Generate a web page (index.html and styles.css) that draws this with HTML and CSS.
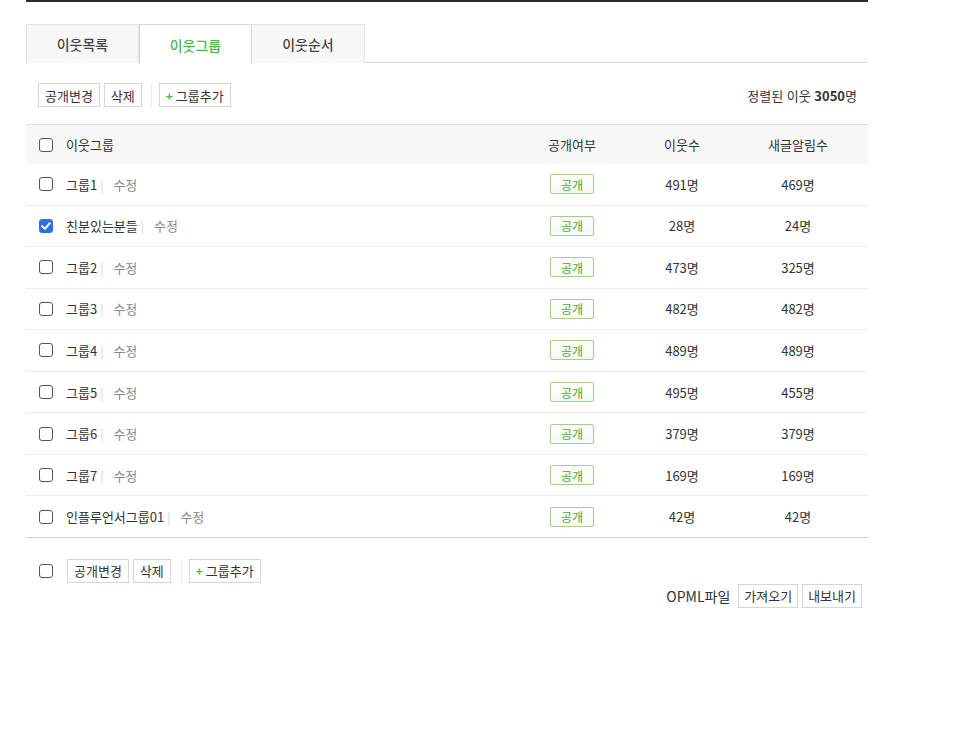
FILE: index.html
```html
<!DOCTYPE html>
<html lang="ko">
<head>
<meta charset="utf-8">
<link rel="stylesheet" href="styles.css">
</head>
<body>
<div class="wrap">
  <div class="topline"></div>
  <div class="tabs">
    <div class="tab">이웃목록</div>
    <div class="tab active">이웃그룹</div>
    <div class="tab">이웃순서</div>
  </div>
  <div class="toolbar">
    <div class="btns">
      <span class="btn">공개변경</span>
      <span class="btn">삭제</span>
      <span class="sep"></span>
      <span class="btn"><span class="plus">+</span>그룹추가</span>
    </div>
    <div class="count">정렬된 이웃 <b>3050</b>명</div>
  </div>
  <div class="table">
    <div class="row head">
      <div class="c-name"><span class="cb"></span>이웃그룹</div>
      <div class="c-mid">공개여부</div>
      <div class="c-mid">이웃수</div>
      <div class="c-mid">새글알림수</div>
    </div>
    <div class="row"><div class="c-name"><span class="cb"></span>그룹1<span class="bar">|</span><span class="edit">수정</span></div><div class="c-mid"><span class="pub">공개</span></div><div class="c-mid">491명</div><div class="c-mid">469명</div></div>
    <div class="row"><div class="c-name"><span class="cb checked"><svg viewBox="0 0 14 14" width="14" height="14"><path d="M3.2 7.2 L6 9.8 L10.8 4.2" fill="none" stroke="#fff" stroke-width="2" stroke-linecap="round" stroke-linejoin="round"/></svg></span>친분있는분들<span class="bar">|</span><span class="edit">수정</span></div><div class="c-mid"><span class="pub">공개</span></div><div class="c-mid">28명</div><div class="c-mid">24명</div></div>
    <div class="row"><div class="c-name"><span class="cb"></span>그룹2<span class="bar">|</span><span class="edit">수정</span></div><div class="c-mid"><span class="pub">공개</span></div><div class="c-mid">473명</div><div class="c-mid">325명</div></div>
    <div class="row"><div class="c-name"><span class="cb"></span>그룹3<span class="bar">|</span><span class="edit">수정</span></div><div class="c-mid"><span class="pub">공개</span></div><div class="c-mid">482명</div><div class="c-mid">482명</div></div>
    <div class="row"><div class="c-name"><span class="cb"></span>그룹4<span class="bar">|</span><span class="edit">수정</span></div><div class="c-mid"><span class="pub">공개</span></div><div class="c-mid">489명</div><div class="c-mid">489명</div></div>
    <div class="row"><div class="c-name"><span class="cb"></span>그룹5<span class="bar">|</span><span class="edit">수정</span></div><div class="c-mid"><span class="pub">공개</span></div><div class="c-mid">495명</div><div class="c-mid">455명</div></div>
    <div class="row"><div class="c-name"><span class="cb"></span>그룹6<span class="bar">|</span><span class="edit">수정</span></div><div class="c-mid"><span class="pub">공개</span></div><div class="c-mid">379명</div><div class="c-mid">379명</div></div>
    <div class="row"><div class="c-name"><span class="cb"></span>그룹7<span class="bar">|</span><span class="edit">수정</span></div><div class="c-mid"><span class="pub">공개</span></div><div class="c-mid">169명</div><div class="c-mid">169명</div></div>
    <div class="row last"><div class="c-name"><span class="cb"></span>인플루언서그룹01<span class="bar">|</span><span class="edit">수정</span></div><div class="c-mid"><span class="pub">공개</span></div><div class="c-mid">42명</div><div class="c-mid">42명</div></div>
  </div>
  <div class="bottom">
    <span class="cb"></span>
    <span class="btn">공개변경</span>
    <span class="btn">삭제</span>
    <span class="sep"></span>
    <span class="btn"><span class="plus">+</span>그룹추가</span>
  </div>
  <div class="opml">
    <span class="opml-label">OPML파일</span>
    <span class="btn">가져오기</span>
    <span class="btn">내보내기</span>
  </div>
</div>
</body>
</html>
```
FILE: styles.css
```css
* { box-sizing: border-box; }
body {
  margin: 0;
  background: #fff;
  font-family: "Noto Sans CJK KR", "Noto Sans", sans-serif;
  font-size: 13px;
  color: #333;
}
.wrap {
  width: 842px;
  margin-left: 26px;
}
.topline {
  height: 2px;
  background: #2b2b2b;
}
.tabs {
  margin-top: 22px;
  display: flex;
  height: 39px;
  border-bottom: 1px solid #d9d9d9;
}
.tab {
  width: 113px;
  height: 39px;
  display: flex;
  align-items: center;
  justify-content: center;
  background: #f7f7f7;
  border: 1px solid #e4e4e4;
  border-bottom: none;
  font-size: 14px;
  font-weight: 500;
  color: #444;
}
.tab + .tab { border-left: none; }
.tab.active {
  background: #fff;
  color: #4cb84a;
  border: 1px solid #d9d9d9;
  border-bottom: none;
  height: 40px;
  margin-bottom: -1px;
}
.tab.active + .tab { border-left: none; }
.toolbar {
  margin-top: 20px;
  padding: 0 11px 0 12px;
  display: flex;
  align-items: center;
  justify-content: space-between;
  height: 24px;
}
.btns, .bottom, .opml {
  display: flex;
  align-items: center;
}
.btn {
  display: inline-flex;
  align-items: center;
  height: 24px;
  padding: 0 6px;
  border: 1px solid #d6d6d6;
  background: #fff;
  color: #333;
  font-size: 13px;
  margin-right: 4px;
  white-space: nowrap;
}
.plus {
  color: #4cb84a;
  font-weight: 700;
  font-size: 12px;
  margin-right: 3px;
}
.sep {
  width: 1px;
  height: 24px;
  background: #ececec;
  margin: 0 7px 0 5px;
}
.count {
  font-size: 13px;
  color: #333;
}
.count b { font-weight: 700; }
.table {
  margin-top: 17px;
}
.row {
  display: grid;
  grid-template-columns: 496px 100px 120px 112px 1fr;
  height: 41.55px;
  border-bottom: 1px solid #ededed;
  align-items: center;
}
.row.head {
  height: 40px;
  background: #f7f7f7;
  border-top: 1px solid #dcdcdc;
  border-bottom: none;
}
.row.last {
  border-bottom: 1px solid #cfcfcf;
}
.c-name {
  display: flex;
  align-items: center;
  padding-left: 13px;
  white-space: nowrap;
}
.c-mid {
  text-align: center;
}
.cb {
  width: 14px;
  height: 14px;
  border: 1px solid #555;
  border-radius: 3px;
  background: #fff;
  margin-right: 13px;
  display: inline-block;
  flex: none;
}
.cb.checked {
  background: #2f6fe0;
  border-color: #2f6fe0;
  position: relative;
}
.cb.checked svg {
  position: absolute;
  left: -1px;
  top: -1px;
}
.bar {
  color: #d5d5d5;
  margin: 0 10px 0 3px;
  font-size: 12px;
}
.edit {
  color: #888;
}
.pub {
  display: inline-flex;
  align-items: center;
  justify-content: center;
  width: 44px;
  height: 20px;
  border: 1px solid #9fd08f;
  border-radius: 2px;
  background: linear-gradient(#fff, #f4f9f1);
  color: #4aa83a;
  font-size: 12px;
}
.bottom {
  margin-top: 21px;
  padding-left: 13px;
}
.bottom .cb { margin-right: 14px; }
.bottom .sep { margin: 0 7px 0 6px; }
.opml {
  margin-top: 1px;
  justify-content: flex-end;
  padding-right: 2px;
}
.opml .btn { padding: 0 5px; }
.opml-label {
  font-size: 14px;
  margin-right: 8px;
  color: #333;
}
```
